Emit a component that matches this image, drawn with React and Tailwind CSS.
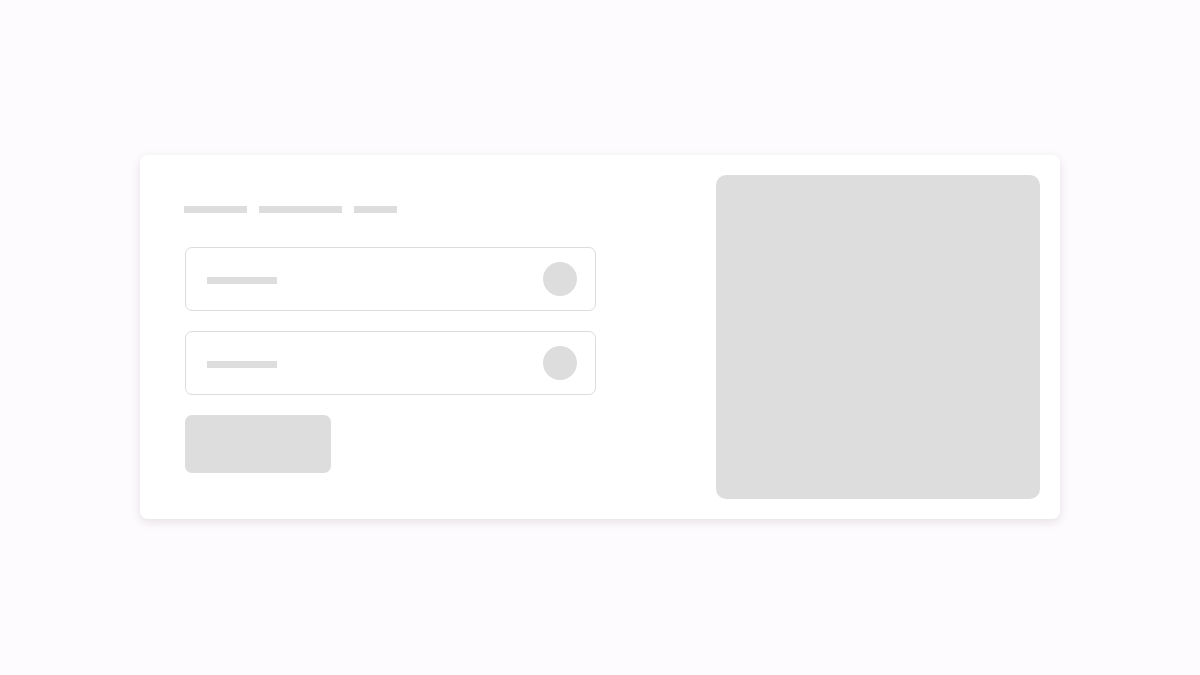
export default function App() {
  const Input = () => (
    <div className="ml-px flex h-[64px] w-[411px] items-center justify-between rounded-[7px] border border-[#dcdcdc] bg-white pl-[21px] pr-[18px]">
      <div className="mt-[3px] h-[7px] w-[70px] bg-[#dddddd]" />
      <div className="h-[34px] w-[34px] rounded-full bg-[#dddddd]" />
    </div>
  );
  return (
    <div className="flex h-screen w-full items-center justify-center bg-[#fdfbfd]" style={{ fontFamily: "Inter, sans-serif" }}>
      <div className="mb-px flex h-[364px] w-[920px] justify-between rounded-[8px] bg-white p-[20px] shadow-[0_3px_10px_rgba(70,40,80,0.13)]">
        <div className="flex flex-col pl-[24px] pt-[31px]">
          <div className="flex gap-[12px]">
            <div className="h-[7px] w-[63px] bg-[#dddddd]" />
            <div className="h-[7px] w-[83px] bg-[#dddddd]" />
            <div className="h-[7px] w-[43px] bg-[#dddddd]" />
          </div>
          <div className="mt-[34px] flex flex-col gap-[20px]">
            <Input />
            <Input />
            <div className="ml-px h-[58px] w-[146px] rounded-[7px] bg-[#dddddd]" />
          </div>
        </div>
        <div className="h-[324px] w-[324px] rounded-[10px] bg-[#dddddd]" />
      </div>
    </div>
  );
}
